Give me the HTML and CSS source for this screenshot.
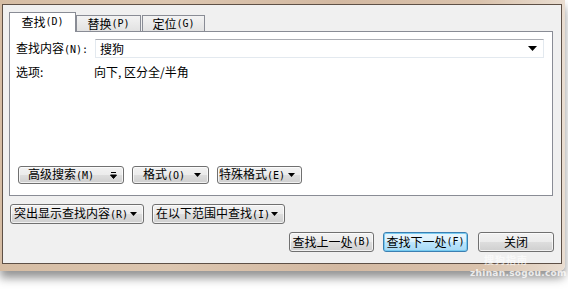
FILE: index.html
```html
<!DOCTYPE html>
<html lang="zh-CN">
<head>
<meta charset="utf-8">
<title>查找和替换</title>
<link rel="stylesheet" href="styles.css">
</head>
<body>
<div class="screen">
  <div class="frame">
    <div class="dialog">
      <div class="tabs">
        <div class="tab tab-active">查找<span class="k">(D)</span></div>
        <div class="tab tab-2">替换<span class="k">(P)</span></div>
        <div class="tab tab-3">定位<span class="k">(G)</span></div>
      </div>
      <div class="panel">
        <div class="field-row">
          <div class="label">查找内容<span class="k">(N):</span></div>
          <div class="combo">
            <span class="combo-text">搜狗</span>
            <svg class="combo-arrow" width="9" height="5" viewBox="0 0 9 5"><path d="M0 0H9L4.5 5Z" fill="#000"/></svg>
          </div>
        </div>
        <div class="opt-row">
          <div class="label">选项:</div>
          <div class="opt-value">向下, 区分全/半角</div>
        </div>
        <div class="btn-row panel-btns">
          <div class="btn drop b-adv">
            <span>高级搜索<span class="k">(M)</span></span>
            <svg width="7" height="8" viewBox="0 0 7 8"><path d="M1 1.5H6M0.5 4H6.5L3.5 7.5Z" stroke="#000" stroke-width="1" fill="#000"/></svg>
          </div>
          <div class="btn drop b-fmt">
            <span>格式<span class="k">(O)</span></span>
            <svg width="7" height="4" viewBox="0 0 7 4"><path d="M0 0H7L3.5 4Z" fill="#000"/></svg>
          </div>
          <div class="btn drop b-spc">
            <span>特殊格式<span class="k">(E)</span></span>
            <svg width="7" height="4" viewBox="0 0 7 4"><path d="M0 0H7L3.5 4Z" fill="#000"/></svg>
          </div>
        </div>
      </div>
      <div class="btn-row row-2">
        <div class="btn drop b-hl">
          <span>突出显示查找内容<span class="k">(R)</span></span>
          <svg width="7" height="4" viewBox="0 0 7 4"><path d="M0 0H7L3.5 4Z" fill="#000"/></svg>
        </div>
        <div class="btn drop b-rng">
          <span>在以下范围中查找<span class="k">(I)</span></span>
          <svg width="7" height="4" viewBox="0 0 7 4"><path d="M0 0H7L3.5 4Z" fill="#000"/></svg>
        </div>
      </div>
      <div class="btn-row row-3">
        <div class="btn center b-prev">查找上一处<span class="k">(B)</span></div>
        <div class="btn center btn-focus b-next">查找下一处<span class="k">(F)</span></div>
        <div class="btn center b-close">关闭</div>
      </div>
    </div>
  </div>
  <div class="watermark">
    <div class="wm-logo">搜狗指南</div>
    <div class="wm-url">zhinan.sogou.com</div>
  </div>
</div>
</body>
</html>
```

FILE: styles.css
```css
* { box-sizing: border-box; }
html, body {
  margin: 0;
  padding: 0;
  background: #ffffff;
}
body {
  font-family: "Noto Sans CJK SC", "DejaVu Sans", sans-serif;
  font-size: 12px;
  color: #000;
}
.screen {
  position: relative;
  width: 568px;
  height: 302px;
  overflow: hidden;
  background: #ffffff;
}
.frame {
  width: 565px;
  padding: 4px 3px 7px 2px;
  background: linear-gradient(90deg, #d6bda4 0%, #dcc6b0 30%, #d3b9a2 60%, #dac3ad 85%, #e9ddd1 100%);
  border-bottom-right-radius: 6px;
  box-shadow: 0 7px 10px rgba(60, 60, 60, 0.55);
}
.dialog {
  width: 560px;
  height: 260px;
  border: 1px solid #5e5046;
  background: #f0f0f0;
  padding: 7px 8px 0 6px;
  display: flex;
  flex-direction: column;
}
.k {
  font-family: "DejaVu Sans Mono", "Liberation Mono", monospace;
  font-size: 10px;
}
.tabs {
  display: flex;
  align-items: flex-end;
  height: 19px;
}
.tab {
  height: 16px;
  border: 1px solid #898c95;
  border-bottom: none;
  background: linear-gradient(#f3f3f3, #e2e2e2);
  display: flex;
  align-items: center;
  justify-content: center;
  line-height: 14px;
}
.tab-active {
  position: relative;
  z-index: 1;
  width: 67px;
  height: 20px;
  margin-bottom: -1px;
  background: #ffffff;
  padding-bottom: 1px;
}
.tab-2 { width: 65px; }
.tab-3 { width: 63px; margin-left: 1px; }
.panel {
  height: 165px;
  border: 1px solid #898c95;
  background: #ffffff;
  padding: 7px 8px 11px 6px;
  display: flex;
  flex-direction: column;
}
.field-row {
  display: flex;
  align-items: center;
  height: 19px;
}
.label {
  width: 79px;
  flex: none;
  line-height: 16px;
}
.combo {
  flex: 1;
  height: 19px;
  border: 1px solid #e3e9ef;
  border-top-color: #abadb3;
  display: flex;
  align-items: center;
  justify-content: space-between;
  padding: 0 6px 0 4px;
  background: #fff;
}
.combo-text { line-height: 16px; }
.combo-arrow { display: block; }
.opt-row {
  display: flex;
  align-items: center;
  margin-top: 6px;
  line-height: 16px;
}
.opt-value { margin-left: -1px; }
.btn-row {
  display: flex;
}
.panel-btns {
  margin-top: auto;
  padding-left: 2px;
  gap: 8px;
}
.btn {
  height: 18px;
  border: 1px solid #707070;
  border-radius: 3px;
  background: linear-gradient(#f2f2f2 0%, #ebebeb 50%, #dddddd 51%, #cfcfcf 100%);
  display: flex;
  align-items: center;
  line-height: 14px;
  box-shadow: inset 0 0 0 1px rgba(255, 255, 255, 0.7);
  white-space: nowrap;
}
.btn svg { display: block; flex: none; }
.drop { justify-content: space-between; }
.center { justify-content: center; }
.b-adv { width: 106px; padding: 0 6px 0 9px; }
.b-fmt { width: 77px; padding: 0 7px 0 10px; }
.b-spc { width: 85px; padding: 0 6px 0 1px; }
.row-2 {
  margin-top: 8px;
  margin-left: 1px;
  gap: 8px;
}
.row-2 .btn { height: 20px; }
.b-hl { width: 134px; padding: 0 6px 0 3px; }
.b-rng { width: 133px; padding: 0 6px 0 3px; }
.row-3 {
  margin-top: 8px;
  justify-content: flex-end;
  margin-right: -1px;
}
.row-3 .btn { height: 20px; }
.b-prev { width: 85px; }
.b-next { width: 85px; margin-left: 9px; }
.b-close { width: 76px; margin-left: 10px; }
.btn-focus {
  border-color: #3c7fb1;
  background: linear-gradient(#eaf6fd 0%, #d9f0fc 50%, #bee6fd 51%, #a7d9f5 100%);
  box-shadow: inset 0 0 0 1px rgba(110, 200, 240, 0.9);
}
.watermark {
  position: absolute;
  left: 470px;
  top: 254px;
  white-space: nowrap;
  pointer-events: none;
}
.wm-logo {
  font-size: 10px;
  font-weight: bold;
  color: rgba(255, 255, 255, 0.65);
  line-height: 11px;
  padding-left: 14px;
  letter-spacing: 1px;
}
.wm-url {
  margin-top: 3px;
  font-family: "DejaVu Sans", sans-serif;
  font-size: 9px;
  font-weight: bold;
  letter-spacing: 0.3px;
  color: rgba(255, 255, 255, 0.8);
  line-height: 10px;
}
```
